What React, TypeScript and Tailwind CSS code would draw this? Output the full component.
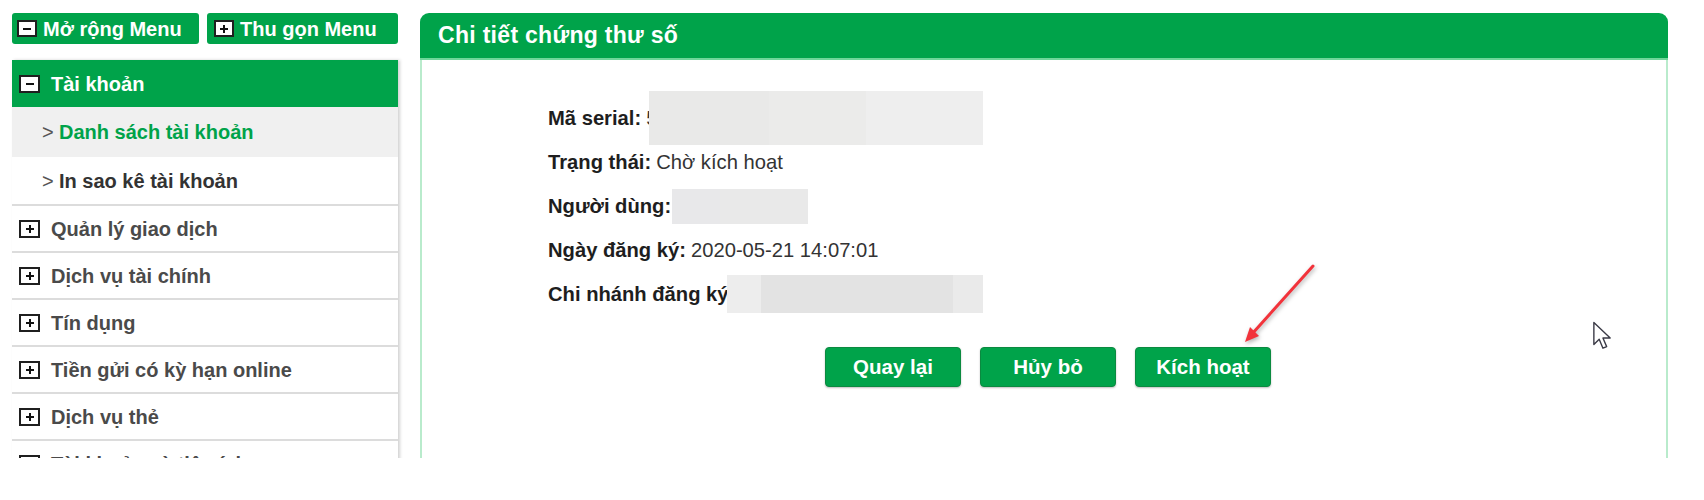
const menuItems = [
  "Quản lý giao dịch",
  "Dịch vụ tài chính",
  "Tín dụng",
  "Tiền gửi có kỳ hạn online",
  "Dịch vụ thẻ",
  "Tài khoản và tiện ích",
];

function ToggleBox({ open, small = false }: { open: boolean; small?: boolean }) {
  return (
    <span
      className={`relative flex shrink-0 items-center justify-center border-2 border-[#1f1f1f] bg-white ${
        small ? "h-[17px] w-[20px]" : "h-[18px] w-[21px]"
      }`}
    >
      <span className="h-[2px] w-[8px] bg-[#111]" />
      {!open && <span className="absolute h-[8px] w-[2px] bg-[#111]" />}
    </span>
  );
}

function Sidebar() {
  return (
    <aside className="w-[386px] shrink-0">
      <div className="flex gap-[8px]">
        <button className="flex h-[31px] w-[187px] items-center gap-[6px] rounded-[3px] bg-[#00a34a] pl-[5px] text-[20px] font-bold text-white">
          <ToggleBox open small />
          Mở rộng Menu
        </button>
        <button className="flex h-[31px] w-[191px] items-center gap-[6px] rounded-[3px] bg-[#00a34a] pl-[7px] text-[20px] font-bold text-white">
          <ToggleBox open={false} small />
          Thu gọn Menu
        </button>
      </div>

      <nav className="mt-[16px] bg-white shadow-[2px_0_3px_rgba(0,0,0,0.18)]">
        <div className="flex h-[47px] items-center gap-[11px] bg-[#00a34a] pl-[7px] text-[20px] font-bold text-white">
          <ToggleBox open />
          Tài khoản
        </div>
        <div className="flex h-[50px] items-center bg-[#f0f0f0] pl-[30px] text-[20px]">
          <span className="w-[17px] font-normal text-[#555]">&gt;</span>
          <span className="font-bold text-[#00a34a]">Danh sách tài khoản</span>
        </div>
        <div className="flex h-[49px] items-center border-b-2 border-[#dcdcdc] pl-[30px] text-[20px]">
          <span className="w-[17px] font-normal text-[#555]">&gt;</span>
          <span className="font-bold text-[#333]">In sao kê tài khoản</span>
        </div>
        {menuItems.map((item) => (
          <div
            key={item}
            className="flex h-[47px] items-center gap-[11px] border-b-2 border-[#dcdcdc] pl-[7px] text-[20px] font-bold text-[#4a4a4a]"
          >
            <ToggleBox open={false} />
            {item}
          </div>
        ))}
      </nav>
    </aside>
  );
}

function Field({ label, children }: { label: string; children?: React.ReactNode }) {
  return (
    <div className="flex h-[44px] items-center text-[20.2px] text-[#333]">
      <span className="font-bold text-[#1e1e1e]">{label}</span>
      {children}
    </div>
  );
}

function CertificateDetail() {
  return (
    <section className="relative flex-1">
      <div className="flex h-[47px] items-center rounded-t-[9px] border-b-2 border-[#6fd69a] bg-[#00a34a] pl-[18px]">
        <h2 className="text-[23px] font-bold tracking-[0.3px] text-white">Chi tiết chứng thư số</h2>
      </div>

      <div className="h-[420px] border-x-2 border-[#b9ebcc] pl-[126px] pt-[36px]">
        <Field label="Mã serial:">
          <span className="ml-[5px]">5</span>
          <span className="-ml-[8px] flex h-[54px] w-[334px]">
            <span className="w-[120px] bg-[#e9e9e8]" />
            <span className="w-[97px] bg-[#ebebea]" />
            <span className="flex-1 bg-[#eeeeee]" />
          </span>
        </Field>
        <Field label="Trạng thái:">
          <span className="ml-[5px]">Chờ kích hoạt</span>
        </Field>
        <Field label="Người dùng:">
          <span className="ml-[1px] flex h-[35px] w-[136px]">
            <span className="w-[48px] bg-[#e8e8ea]" />
            <span className="flex-1 bg-[#e9e9e9]" />
          </span>
        </Field>
        <Field label="Ngày đăng ký:">
          <span className="ml-[5px]">2020-05-21 14:07:01</span>
        </Field>
        <Field label="Chi nhánh đăng ký">
          <span className="-ml-[2px] flex h-[38px] w-[256px]">
            <span className="w-[34px] bg-[#ededed]" />
            <span className="w-[192px] bg-[#e3e3e3]" />
            <span className="flex-1 bg-[#eaeaea]" />
          </span>
        </Field>

        <div className="mt-[31px] flex justify-center gap-[19px] pl-[12px] pr-[130px]">
          {["Quay lại", "Hủy bỏ", "Kích hoạt"].map((label) => (
            <button
              key={label}
              className="h-[40px] w-[136px] rounded-[4px] border border-[#0b8a40] bg-[#00a34a] text-[20.5px] font-bold text-white shadow-[0_1px_2px_rgba(0,0,0,0.25)]"
            >
              {label}
            </button>
          ))}
        </div>
      </div>

      {/* red annotation arrow */}
      <svg
        className="absolute left-[810px] top-[242px] h-[100px] w-[100px] drop-shadow-[1px_2px_2px_rgba(0,0,0,0.3)]"
        viewBox="0 0 100 100"
      >
        <line x1="83" y1="11" x2="22" y2="79" stroke="#f2333b" strokeWidth="3" strokeLinecap="round" />
        <polygon points="15,87 29,81 20,72" fill="#f2333b" />
      </svg>

      {/* mouse cursor */}
      <svg className="absolute left-[1172px] top-[308px] h-[32px] w-[24px]" viewBox="0 0 22 30">
        <path
          d="M1.5 1.5 L1.5 22 L6.5 17.2 L10 25.5 L13.5 24 L10 16 L16.8 16 Z"
          fill="white"
          stroke="#3a3a46"
          strokeWidth="1.3"
          strokeLinejoin="round"
        />
      </svg>
    </section>
  );
}

export default function App() {
  return (
    <div className="h-[500px] w-[1704px] bg-white font-['Liberation_Sans',Arial,sans-serif]">
      <div className="flex h-[458px] gap-[22px] overflow-hidden pl-[12px] pr-[36px] pt-[13px]">
        <Sidebar />
        <CertificateDetail />
      </div>
    </div>
  );
}
